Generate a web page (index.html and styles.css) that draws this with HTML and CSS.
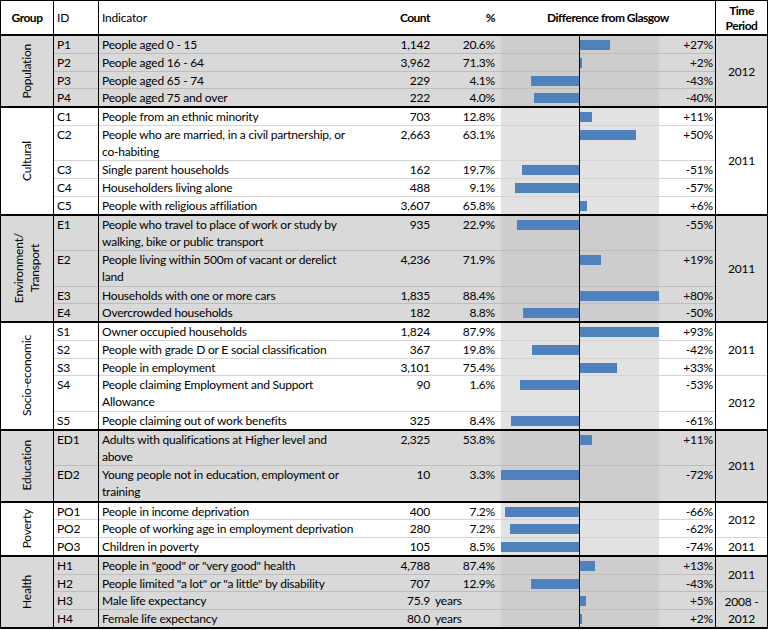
FILE: index.html
```html
<!DOCTYPE html>
<html lang="en">
<head>
<meta charset="utf-8">
<title>Neighbourhood profile</title>
<link rel="stylesheet" href="styles.css">
</head>
<body>
<div class="sheet">
  <div class="head">
    <div class="h hgrp b">Group</div>
    <div class="h hid">ID</div>
    <div class="h hind">Indicator</div>
    <div class="h hcnt b">Count</div>
    <div class="h hpct b">%</div>
    <div class="h hdiff b">Difference from Glasgow</div>
    <div class="h htime b">Time<br>Period</div>
  </div>

  <section class="grp gray u4">
    <div class="gname"><span>Population</span></div>
    <div class="r"><div class="id">P1</div><div class="ind">People aged 0 - 15</div><div class="cnt">1,142</div><div class="pct">20.6%</div><div class="chart"><div class="neg"></div><div class="pos"><i class="bar" style="width:30px"></i></div></div><div class="dif">+27%</div><div class="time s4">2012</div></div>
    <div class="r"><div class="id">P2</div><div class="ind">People aged 16 - 64</div><div class="cnt">3,962</div><div class="pct">71.3%</div><div class="chart"><div class="neg"></div><div class="pos"><i class="bar" style="width:2px"></i></div></div><div class="dif">+2%</div></div>
    <div class="r"><div class="id">P3</div><div class="ind">People aged 65 - 74</div><div class="cnt">229</div><div class="pct">4.1%</div><div class="chart"><div class="neg"><i class="bar" style="width:48px"></i></div><div class="pos"></div></div><div class="dif">-43%</div></div>
    <div class="r"><div class="id">P4</div><div class="ind">People aged 75 and over</div><div class="cnt">222</div><div class="pct">4.0%</div><div class="chart"><div class="neg"><i class="bar" style="width:45px"></i></div><div class="pos"></div></div><div class="dif">-40%</div></div>
  </section>

  <section class="grp white u6">
    <div class="gname"><span>Cultural</span></div>
    <div class="r"><div class="id">C1</div><div class="ind">People from an ethnic minority</div><div class="cnt">703</div><div class="pct">12.8%</div><div class="chart"><div class="neg"></div><div class="pos"><i class="bar" style="width:12px"></i></div></div><div class="dif">+11%</div><div class="time s6">2011</div></div>
    <div class="r d"><div class="id">C2</div><div class="ind">People who are married, in a civil partnership, or<br>co-habiting</div><div class="cnt">2,663</div><div class="pct">63.1%</div><div class="chart"><div class="neg"></div><div class="pos"><i class="bar" style="width:56px"></i></div></div><div class="dif">+50%</div></div>
    <div class="r"><div class="id">C3</div><div class="ind">Single parent households</div><div class="cnt">162</div><div class="pct">19.7%</div><div class="chart"><div class="neg"><i class="bar" style="width:57px"></i></div><div class="pos"></div></div><div class="dif">-51%</div></div>
    <div class="r"><div class="id">C4</div><div class="ind">Householders living alone</div><div class="cnt">488</div><div class="pct">9.1%</div><div class="chart"><div class="neg"><i class="bar" style="width:64px"></i></div><div class="pos"></div></div><div class="dif">-57%</div></div>
    <div class="r"><div class="id">C5</div><div class="ind">People with religious affiliation</div><div class="cnt">3,607</div><div class="pct">65.8%</div><div class="chart"><div class="neg"></div><div class="pos"><i class="bar" style="width:7px"></i></div></div><div class="dif">+6%</div></div>
  </section>

  <section class="grp gray u6">
    <div class="gname"><span>Environment/<br>Transport</span></div>
    <div class="r d"><div class="id">E1</div><div class="ind">People who travel to place of work or study by<br>walking, bike or public transport</div><div class="cnt">935</div><div class="pct">22.9%</div><div class="chart"><div class="neg"><i class="bar" style="width:62px"></i></div><div class="pos"></div></div><div class="dif">-55%</div><div class="time s6">2011</div></div>
    <div class="r d"><div class="id">E2</div><div class="ind">People living within 500m of vacant or derelict<br>land</div><div class="cnt">4,236</div><div class="pct">71.9%</div><div class="chart"><div class="neg"></div><div class="pos"><i class="bar" style="width:21px"></i></div></div><div class="dif">+19%</div></div>
    <div class="r"><div class="id">E3</div><div class="ind">Households with one or more cars</div><div class="cnt">1,835</div><div class="pct">88.4%</div><div class="chart"><div class="neg"></div><div class="pos"><i class="bar" style="width:79px"></i></div></div><div class="dif">+80%</div></div>
    <div class="r"><div class="id">E4</div><div class="ind">Overcrowded households</div><div class="cnt">182</div><div class="pct">8.8%</div><div class="chart"><div class="neg"><i class="bar" style="width:56px"></i></div><div class="pos"></div></div><div class="dif">-50%</div></div>
  </section>

  <section class="grp white u6">
    <div class="gname"><span>Socio-economic</span></div>
    <div class="r"><div class="id">S1</div><div class="ind">Owner occupied households</div><div class="cnt">1,824</div><div class="pct">87.9%</div><div class="chart"><div class="neg"></div><div class="pos"><i class="bar" style="width:79px"></i></div></div><div class="dif">+93%</div><div class="time s3">2011</div></div>
    <div class="r"><div class="id">S2</div><div class="ind">People with grade D or E social classification</div><div class="cnt">367</div><div class="pct">19.8%</div><div class="chart"><div class="neg"><i class="bar" style="width:47px"></i></div><div class="pos"></div></div><div class="dif">-42%</div></div>
    <div class="r"><div class="id">S3</div><div class="ind">People in employment</div><div class="cnt">3,101</div><div class="pct">75.4%</div><div class="chart"><div class="neg"></div><div class="pos"><i class="bar" style="width:37px"></i></div></div><div class="dif">+33%</div></div>
    <div class="r d"><div class="id">S4</div><div class="ind">People claiming Employment and Support<br>Allowance</div><div class="cnt">90</div><div class="pct">1.6%</div><div class="chart"><div class="neg"><i class="bar" style="width:59px"></i></div><div class="pos"></div></div><div class="dif">-53%</div><div class="time s3">2012</div></div>
    <div class="r"><div class="id">S5</div><div class="ind">People claiming out of work benefits</div><div class="cnt">325</div><div class="pct">8.4%</div><div class="chart"><div class="neg"><i class="bar" style="width:68px"></i></div><div class="pos"></div></div><div class="dif">-61%</div></div>
  </section>

  <section class="grp gray u4">
    <div class="gname"><span>Education</span></div>
    <div class="r d"><div class="id">ED1</div><div class="ind">Adults with qualifications at Higher level and<br>above</div><div class="cnt">2,325</div><div class="pct">53.8%</div><div class="chart"><div class="neg"></div><div class="pos"><i class="bar" style="width:12px"></i></div></div><div class="dif">+11%</div><div class="time s4">2011</div></div>
    <div class="r d"><div class="id">ED2</div><div class="ind">Young people not in education, employment or<br>training</div><div class="cnt">10</div><div class="pct">3.3%</div><div class="chart"><div class="neg"><i class="bar" style="width:78px"></i></div><div class="pos"></div></div><div class="dif">-72%</div></div>
  </section>

  <section class="grp white u3">
    <div class="gname"><span>Poverty</span></div>
    <div class="r"><div class="id">PO1</div><div class="ind">People in income deprivation</div><div class="cnt">400</div><div class="pct">7.2%</div><div class="chart"><div class="neg"><i class="bar" style="width:74px"></i></div><div class="pos"></div></div><div class="dif">-66%</div><div class="time s2">2012</div></div>
    <div class="r"><div class="id">PO2</div><div class="ind">People of working age in employment deprivation</div><div class="cnt">280</div><div class="pct">7.2%</div><div class="chart"><div class="neg"><i class="bar" style="width:69px"></i></div><div class="pos"></div></div><div class="dif">-62%</div></div>
    <div class="r"><div class="id">PO3</div><div class="ind">Children in poverty</div><div class="cnt">105</div><div class="pct">8.5%</div><div class="chart"><div class="neg"><i class="bar" style="width:78px"></i></div><div class="pos"></div></div><div class="dif">-74%</div><div class="time s1">2011</div></div>
  </section>

  <section class="grp gray u4">
    <div class="gname"><span>Health</span></div>
    <div class="r"><div class="id">H1</div><div class="ind">People in "good" or "very good" health</div><div class="cnt">4,788</div><div class="pct">87.4%</div><div class="chart"><div class="neg"></div><div class="pos"><i class="bar" style="width:15px"></i></div></div><div class="dif">+13%</div><div class="time s2">2011</div></div>
    <div class="r"><div class="id">H2</div><div class="ind">People limited "a lot" or "a little" by disability</div><div class="cnt">707</div><div class="pct">12.9%</div><div class="chart"><div class="neg"><i class="bar" style="width:48px"></i></div><div class="pos"></div></div><div class="dif">-43%</div></div>
    <div class="r"><div class="id">H3</div><div class="ind">Male life expectancy</div><div class="cnt">75.9</div><div class="pct yrs">years</div><div class="chart"><div class="neg"></div><div class="pos"><i class="bar" style="width:6px"></i></div></div><div class="dif">+5%</div><div class="time s2">2008 -<br>2012</div></div>
    <div class="r"><div class="id">H4</div><div class="ind">Female life expectancy</div><div class="cnt">80.0</div><div class="pct yrs">years</div><div class="chart"><div class="neg"></div><div class="pos"><i class="bar" style="width:2px"></i></div></div><div class="dif">+2%</div></div>
  </section>
</div>
</body>
</html>
```

FILE: styles.css
```css
html, body {
  margin: 0;
  padding: 0;
  background: #fff;
}

body {
  font-family: "Lato", "Liberation Sans", sans-serif;
  font-size: 12px;
  letter-spacing: -0.2px;
  color: #000;
}

.sheet {
  width: 768px;
  box-sizing: border-box;
  border: 1px solid #000;
  border-bottom-width: 2px;
}

.head,
.grp {
  display: grid;
  grid-template-columns: 53px 45px 273px 61px 68px 158px 56px 52px;
}

/* ---------- header ---------- */
.head {
  height: 33px;
}

.h {
  display: flex;
  align-items: center;
  box-sizing: border-box;
  line-height: 15px;
}

.b {
  font-weight: 700;
  letter-spacing: -0.5px;
}

.hgrp {
  justify-content: center;
  border-right: 1px solid #000;
}

.hid {
  padding-left: 3px;
  border-right: 1px solid #000;
}

.hind { padding-left: 3px; }

.hcnt {
  justify-content: flex-end;
  padding-right: 3px;
}

.hpct {
  justify-content: flex-end;
  padding-right: 6px;
}

.hdiff {
  grid-column: 6 / span 2;
  justify-content: center;
}

.htime {
  justify-content: center;
  text-align: center;
  border-left: 1px solid #000;
}

/* ---------- groups ---------- */
.grp {
  border-top: 2px solid #000;
  row-gap: 1px;
  background: linear-gradient(to right,
      var(--sep) 97px, #000 97px 98px,
      var(--sep) 98px 578px, #000 578px 579px,
      var(--sep) 579px 714px, #000 714px 715px,
      var(--sep) 715px);
}

.gray {
  --bg: #d9d9d9;
  --sep: #bdbdbd;
  --band: #cdcdcd;
}

.white {
  --bg: #ffffff;
  --sep: #d4d4d4;
  --band: #e2e2e2;
}

.u3 { grid-template-rows: repeat(3, 16.75px); }
.u4 { grid-template-rows: repeat(4, 16.75px); }
.u6 { grid-template-rows: repeat(6, 16.75px); }

.r { display: contents; }

.grp .r > * {
  background: var(--bg);
  box-sizing: border-box;
  line-height: 17px;
  white-space: nowrap;
  overflow: hidden;
}

.grp .r.d > * { grid-row: span 2; }

.gname {
  grid-column: 1;
  grid-row: 1 / -1;
  background: var(--bg);
  border-right: 1px solid #000;
  display: flex;
  align-items: center;
  justify-content: center;
}

.gname span {
  writing-mode: vertical-rl;
  transform: rotate(180deg);
  text-align: center;
  line-height: 16px;
}

.id {
  grid-column: 2;
  padding-left: 3px;
  border-right: 1px solid #000;
}

.ind {
  grid-column: 3;
  padding-left: 3px;
}

.cnt {
  grid-column: 4;
  text-align: right;
  padding-right: 3px;
}

.pct {
  grid-column: 5;
  text-align: right;
  padding-right: 6px;
}

.pct.yrs {
  text-align: left;
  padding-left: 2px;
}

.grp .r > .chart {
  grid-column: 6;
  display: flex;
  background: var(--band);
}

.neg {
  width: 78px;
  display: flex;
  justify-content: flex-end;
  align-items: flex-start;
}

.pos {
  flex: 1;
  display: flex;
  align-items: flex-start;
  border-left: 1px solid #000;
}

.bar {
  display: block;
  height: 10px;
  margin-top: 4px;
  background: #4f81bd;
}

.dif {
  grid-column: 7;
  text-align: right;
  padding-right: 2px;
}

.grp .r > .time {
  grid-column: 8;
  border-left: 1px solid #000;
  display: flex;
  align-items: center;
  justify-content: center;
  text-align: center;
  line-height: 17px;
}

.grp .r > .s1 { grid-row: span 1; }
.grp .r > .s2 { grid-row: span 2; }
.grp .r > .s3 { grid-row: span 3; }
.grp .r > .s4 { grid-row: span 4; }
.grp .r > .s6 { grid-row: span 6; }
```
